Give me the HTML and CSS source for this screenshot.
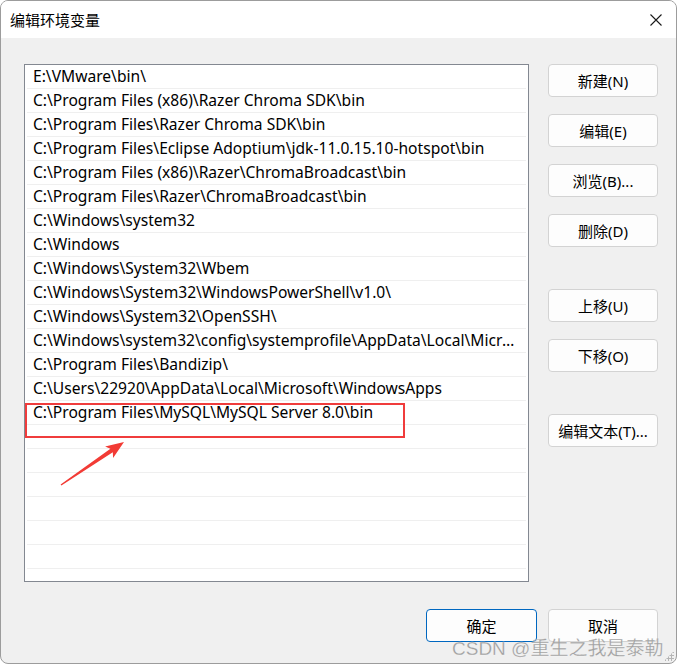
FILE: index.html
```html
<!DOCTYPE html>
<html lang="zh-CN">
<head>
<meta charset="utf-8">
<title>编辑环境变量</title>
<link rel="stylesheet" href="styles.css">
</head>
<body>
<div class="window">
  <div class="titlebar">
    <span class="title">编辑环境变量</span>
    <svg class="close" width="12" height="12" viewBox="0 0 12 12"><path d="M0.5 0.5 L11.5 11.5 M11.5 0.5 L0.5 11.5" stroke="#1a1a1a" stroke-width="1.1" fill="none"/></svg>
  </div>
  <div class="content">
    <div class="main">
      <div class="list">
        <div class="row">E:\VMware\bin\</div>
        <div class="row">C:\Program Files (x86)\Razer Chroma SDK\bin</div>
        <div class="row">C:\Program Files\Razer Chroma SDK\bin</div>
        <div class="row">C:\Program Files\Eclipse Adoptium\jdk-11.0.15.10-hotspot\bin</div>
        <div class="row">C:\Program Files (x86)\Razer\ChromaBroadcast\bin</div>
        <div class="row">C:\Program Files\Razer\ChromaBroadcast\bin</div>
        <div class="row">C:\Windows\system32</div>
        <div class="row">C:\Windows</div>
        <div class="row">C:\Windows\System32\Wbem</div>
        <div class="row">C:\Windows\System32\WindowsPowerShell\v1.0\</div>
        <div class="row">C:\Windows\System32\OpenSSH\</div>
        <div class="row">C:\Windows\system32\config\systemprofile\AppData\Local\Microsoft\WindowsApps</div>
        <div class="row">C:\Program Files\Bandizip\</div>
        <div class="row">C:\Users\22920\AppData\Local\Microsoft\WindowsApps</div>
        <div class="row">C:\Program Files\MySQL\MySQL Server 8.0\bin</div>
        <div class="row"></div>
        <div class="row"></div>
        <div class="row"></div>
        <div class="row"></div>
        <div class="row"></div>
        <div class="row"></div>
        <div class="row"></div>
      </div>
      <div class="side">
        <button class="btn">新建(N)</button>
        <button class="btn">编辑(E)</button>
        <button class="btn">浏览(B)...</button>
        <button class="btn">删除(D)</button>
        <button class="btn group">上移(U)</button>
        <button class="btn">下移(O)</button>
        <button class="btn group">编辑文本(T)...</button>
      </div>
    </div>
    <div class="footer">
      <button class="btn primary">确定</button>
      <button class="btn">取消</button>
    </div>
  </div>
  <div class="highlight"></div>
  <svg class="arrow" width="70" height="50" viewBox="0 0 70 50">
    <polygon points="0.6,45.4 50.4,9.7 45.1,7.4 64,3 53.1,19 52.8,13.3 1.4,46.6" fill="#f23b35"/>
  </svg>
  <div class="watermark">CSDN @重生之我是泰勒</div>
  <div class="grip"></div>
</div>
</body>
</html>
```
FILE: styles.css
```css
html, body {
  margin: 0;
  padding: 0;
  background: #ffffff;
}
body {
  width: 677px;
  height: 664px;
  overflow: hidden;
  font-family: "Noto Sans", "Noto Sans CJK SC", sans-serif;
  color: #1a1a1a;
}
.window {
  position: relative;
  box-sizing: border-box;
  width: 677px;
  height: 664px;
  border: 1px solid #9c9c9c;
  border-radius: 8px;
  background: #f0f0f0;
  overflow: hidden;
  display: flex;
  flex-direction: column;
}
.titlebar {
  height: 37px;
  background: #ffffff;
  display: flex;
  align-items: center;
  justify-content: space-between;
  padding: 0 14px 0 9px;
  flex: none;
}
.title {
  font-family: "Noto Sans CJK SC", sans-serif;
  font-size: 15px;
  color: #000;
}
.close {
  display: block;
}
.content {
  flex: 1;
  display: flex;
  flex-direction: column;
  padding: 26px 18px 0 23px;
}
.main {
  display: flex;
  gap: 19px;
}
.list {
  box-sizing: border-box;
  width: 505px;
  height: 518px;
  background: #ffffff;
  border: 1px solid #838891;
  overflow: hidden;
}
.row {
  box-sizing: border-box;
  height: 24px;
  margin: 0 2px;
  padding: 0 8px 0 6px;
  border-bottom: 1px solid #efefef;
  font-size: 15.6px;
  line-height: 23px;
  white-space: nowrap;
  overflow: hidden;
  text-overflow: ellipsis;
  color: #000;
}
.side {
  display: flex;
  flex-direction: column;
  gap: 17px;
}
.btn {
  box-sizing: border-box;
  width: 110px;
  height: 33px;
  border: 1px solid #d3d3d3;
  border-radius: 4px;
  background: #fdfdfd;
  font-family: "Noto Sans", "Noto Sans CJK SC", sans-serif;
  font-size: 15px;
  color: #000;
  padding: 0;
}
.btn.group {
  margin-top: 25px;
}
.footer {
  display: flex;
  justify-content: flex-end;
  gap: 11px;
  margin-top: 27px;
}
.btn.primary {
  width: 111px;
  border: 1px solid #0067c0;
}
.highlight {
  position: absolute;
  left: 24px;
  top: 402px;
  width: 380px;
  height: 35px;
  box-sizing: border-box;
  border: 2px solid #f03c3c;
}
.arrow {
  position: absolute;
  left: 59px;
  top: 438px;
}
.watermark {
  position: absolute;
  left: 451px;
  top: 632px;
  font-family: "Liberation Sans", "Noto Sans CJK SC", sans-serif;
  font-size: 19px;
  color: rgba(140, 140, 140, 0.8);
  -webkit-text-stroke: 0.3px rgba(255,255,255,0.6);
  white-space: nowrap;
}
.grip {
  position: absolute;
  right: 2px;
  bottom: 2px;
  width: 10px;
  height: 10px;
  background: radial-gradient(circle, #b5b5b5 1px, transparent 1.2px) 0 0 / 3px 3px;
  clip-path: polygon(100% 0, 100% 100%, 0 100%);
}
```
